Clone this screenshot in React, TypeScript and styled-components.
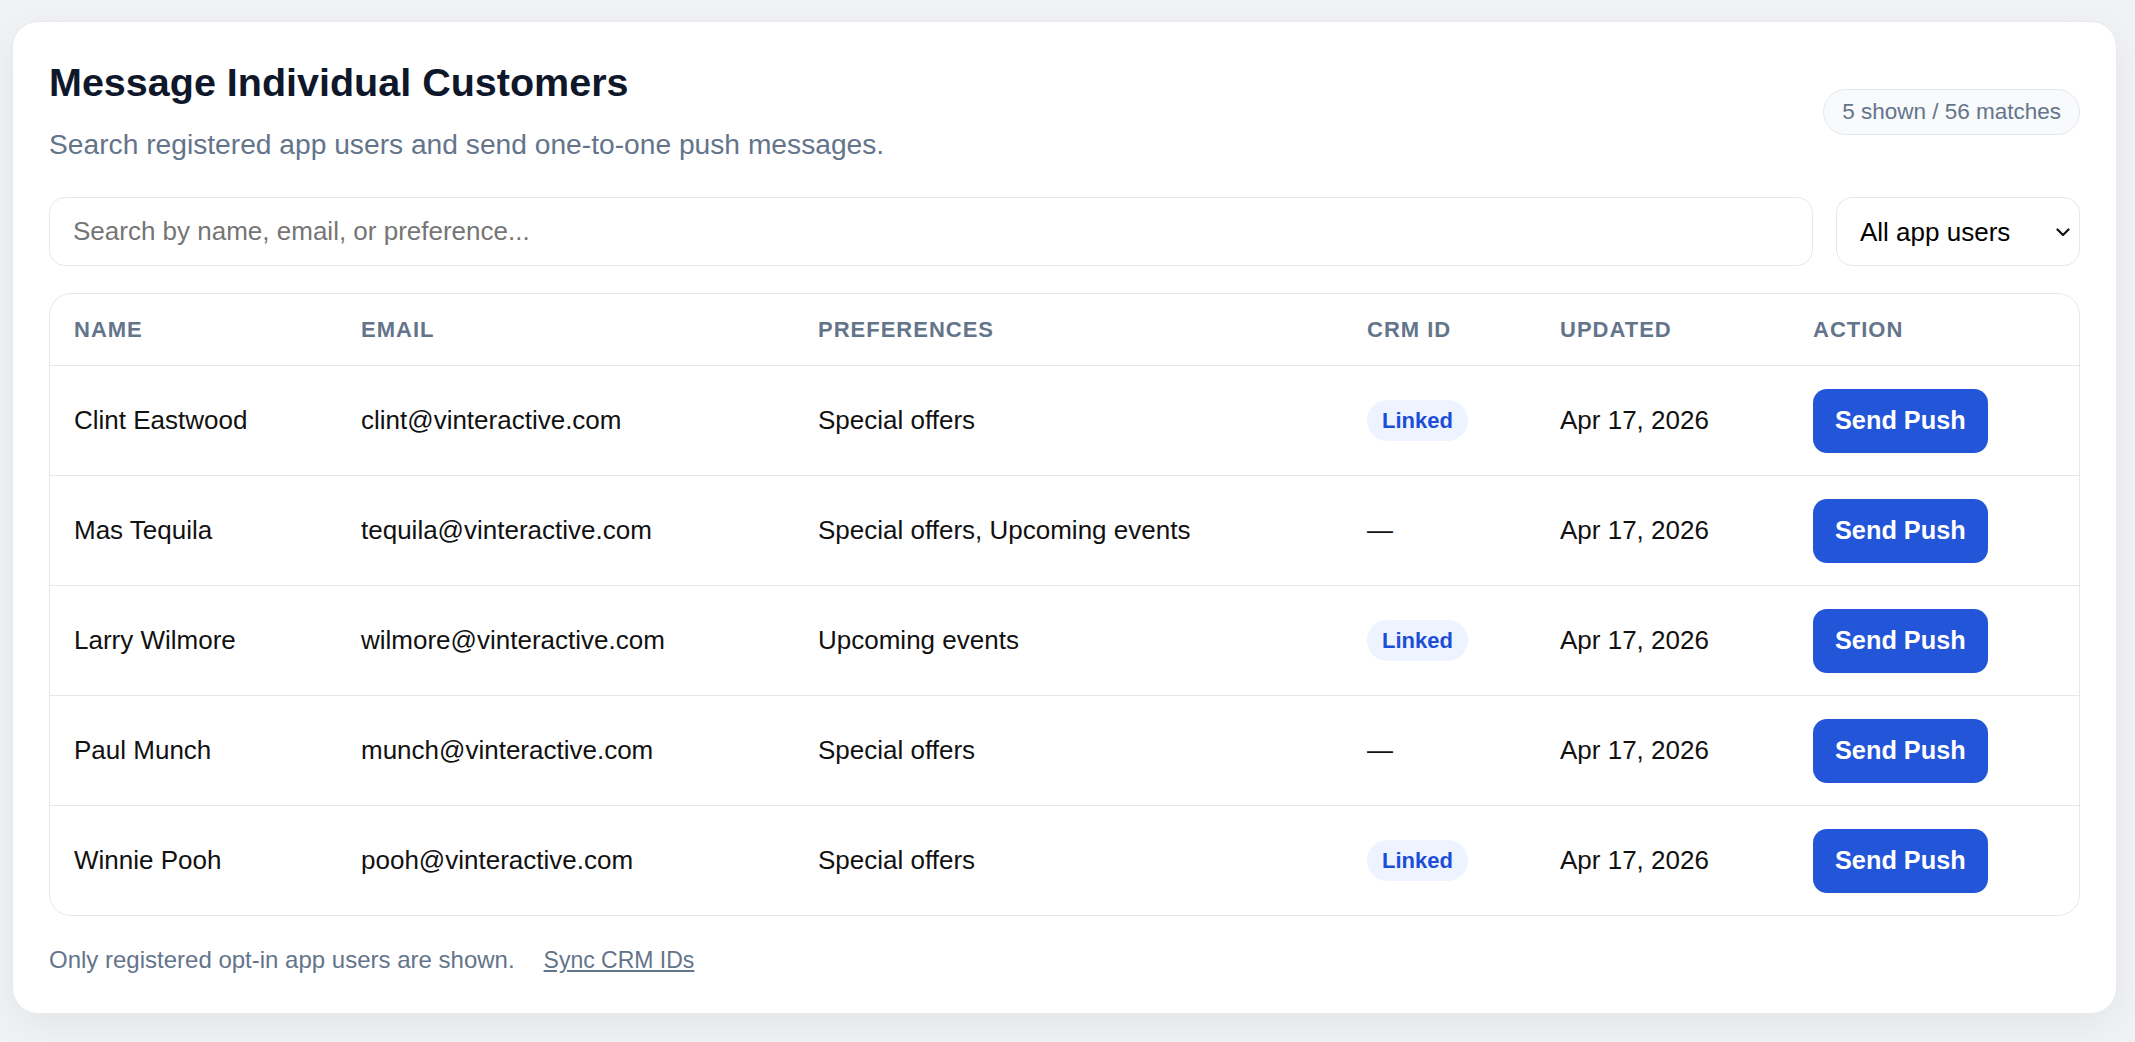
import styled, { createGlobalStyle } from "styled-components";

const GlobalStyle = createGlobalStyle`
  *, *::before, *::after {
    box-sizing: border-box;
  }

  body {
    margin: 0;
    background: #f1f2f5;
    font-family: "Liberation Sans", Arial, sans-serif;
  }
`;

const Page = styled.div`
  padding: 21px 18px 30px 12px;
`;

const Card = styled.section`
  background: #ffffff;
  border: 1px solid #e8eaee;
  border-radius: 26px;
  padding: 36px 36px 38px;
  box-shadow: 0 12px 40px rgba(15, 23, 42, 0.06);
`;

const Header = styled.div`
  display: flex;
  justify-content: space-between;
  align-items: center;
  gap: 24px;
`;

const Title = styled.h1`
  margin: 0;
  font-size: 39.5px;
  line-height: 48px;
  font-weight: 700;
  color: #0f172a;
`;

const Subtitle = styled.p`
  margin: 21px 0 0;
  font-size: 28.2px;
  line-height: 34px;
  color: #64748b;
`;

const CountPill = styled.span`
  display: inline-flex;
  align-items: center;
  height: 46px;
  margin-top: 5px;
  padding: 0 18px;
  border: 1px solid #e5e7eb;
  border-radius: 999px;
  background: #f8fafc;
  color: #64748b;
  font-size: 22.5px;
  white-space: nowrap;
`;

const Toolbar = styled.div`
  display: flex;
  gap: 23px;
  margin-top: 36px;
`;

const SearchInput = styled.input`
  flex: 1;
  height: 69px;
  padding: 0 23px;
  border: 1px solid #e5e7eb;
  border-radius: 16px;
  font-family: "Liberation Sans", Arial, sans-serif;
  font-size: 26px;
  color: #111;
  outline: none;

  &::placeholder {
    color: #757575;
  }
`;

const SelectWrap = styled.div`
  position: relative;
  width: 244px;
`;

const Select = styled.select`
  width: 100%;
  height: 69px;
  padding: 0 48px 0 23px;
  appearance: none;
  background: #ffffff;
  border: 1px solid #e5e7eb;
  border-radius: 16px;
  font-family: "Liberation Sans", Arial, sans-serif;
  font-size: 26px;
  color: #000;
  outline: none;
`;

const Chevron = styled.svg`
  position: absolute;
  right: 10px;
  top: 50%;
  width: 14px;
  height: 9px;
  margin-top: -4px;
  pointer-events: none;
`;

const TableWrap = styled.div`
  margin-top: 27px;
  border: 1px solid #e5e7eb;
  border-radius: 22px;
  overflow: hidden;
`;

const Table = styled.table`
  width: 100%;
  border-collapse: separate;
  border-spacing: 0;
  table-layout: fixed;
`;

const Th = styled.th`
  height: 71px;
  padding: 0 24px;
  text-align: left;
  font-size: 22px;
  font-weight: 700;
  letter-spacing: 1px;
  text-transform: uppercase;
  color: #64748b;
`;

const Td = styled.td`
  height: 110px;
  padding: 0 24px;
  border-top: 1px solid #e5e7eb;
  font-size: 26px;
  color: #111;
  white-space: nowrap;
`;

const LinkedBadge = styled.span`
  display: inline-flex;
  align-items: center;
  height: 41px;
  padding: 0 15px;
  border-radius: 999px;
  background: #eef4ff;
  color: #1d4ed8;
  font-size: 22px;
  font-weight: 700;
`;

const PushButton = styled.button`
  height: 64px;
  padding: 0 22px;
  border: none;
  border-radius: 14px;
  background: #2355d8;
  color: #ffffff;
  font-family: "Liberation Sans", Arial, sans-serif;
  font-size: 25.3px;
  font-weight: 700;
  cursor: pointer;
`;

const Footer = styled.div`
  display: flex;
  align-items: center;
  gap: 29px;
  margin-top: 29px;
  font-size: 24px;
  line-height: 30px;
  color: #64748b;
`;

const FooterLink = styled.a`
  color: inherit;
  font-size: 23px;
  text-decoration: underline;
  cursor: pointer;
`;

type Customer = {
  name: string;
  email: string;
  preferences: string;
  linked: boolean;
  updated: string;
};

const customers: Customer[] = [
  { name: "Clint Eastwood", email: "clint@vinteractive.com", preferences: "Special offers", linked: true, updated: "Apr 17, 2026" },
  { name: "Mas Tequila", email: "tequila@vinteractive.com", preferences: "Special offers, Upcoming events", linked: false, updated: "Apr 17, 2026" },
  { name: "Larry Wilmore", email: "wilmore@vinteractive.com", preferences: "Upcoming events", linked: true, updated: "Apr 17, 2026" },
  { name: "Paul Munch", email: "munch@vinteractive.com", preferences: "Special offers", linked: false, updated: "Apr 17, 2026" },
  { name: "Winnie Pooh", email: "pooh@vinteractive.com", preferences: "Special offers", linked: true, updated: "Apr 17, 2026" },
];

const columns = [
  { label: "Name", width: 287 },
  { label: "Email", width: 457 },
  { label: "Preferences", width: 549 },
  { label: "CRM ID", width: 193 },
  { label: "Updated", width: 253 },
  { label: "Action", width: undefined },
];

const App = () => {
  return (
    <Page>
      <GlobalStyle />
      <Card>
        <Header>
          <div>
            <Title>Message Individual Customers</Title>
            <Subtitle>
              Search registered app users and send one-to-one push messages.
            </Subtitle>
          </div>
          <CountPill>5 shown / 56 matches</CountPill>
        </Header>

        <Toolbar>
          <SearchInput placeholder="Search by name, email, or preference..." />
          <SelectWrap>
            <Select defaultValue="all">
              <option value="all">All app users</option>
              <option value="linked">CRM linked</option>
              <option value="unlinked">Not linked</option>
            </Select>
            <Chevron viewBox="0 0 14 9" fill="none">
              <path
                d="M1.5 1.5L7 7L12.5 1.5"
                stroke="#111"
                strokeWidth="2.2"
                strokeLinecap="round"
                strokeLinejoin="round"
              />
            </Chevron>
          </SelectWrap>
        </Toolbar>

        <TableWrap>
          <Table>
            <colgroup>
              {columns.map((c) => (
                <col key={c.label} style={c.width ? { width: c.width } : undefined} />
              ))}
            </colgroup>
            <thead>
              <tr>
                {columns.map((c) => (
                  <Th key={c.label}>{c.label}</Th>
                ))}
              </tr>
            </thead>
            <tbody>
              {customers.map((c) => (
                <tr key={c.email}>
                  <Td>{c.name}</Td>
                  <Td>{c.email}</Td>
                  <Td>{c.preferences}</Td>
                  <Td>{c.linked ? <LinkedBadge>Linked</LinkedBadge> : "—"}</Td>
                  <Td>{c.updated}</Td>
                  <Td>
                    <PushButton>Send Push</PushButton>
                  </Td>
                </tr>
              ))}
            </tbody>
          </Table>
        </TableWrap>

        <Footer>
          <span>Only registered opt-in app users are shown.</span>
          <FooterLink>Sync CRM IDs</FooterLink>
        </Footer>
      </Card>
    </Page>
  );
};

export default App;
